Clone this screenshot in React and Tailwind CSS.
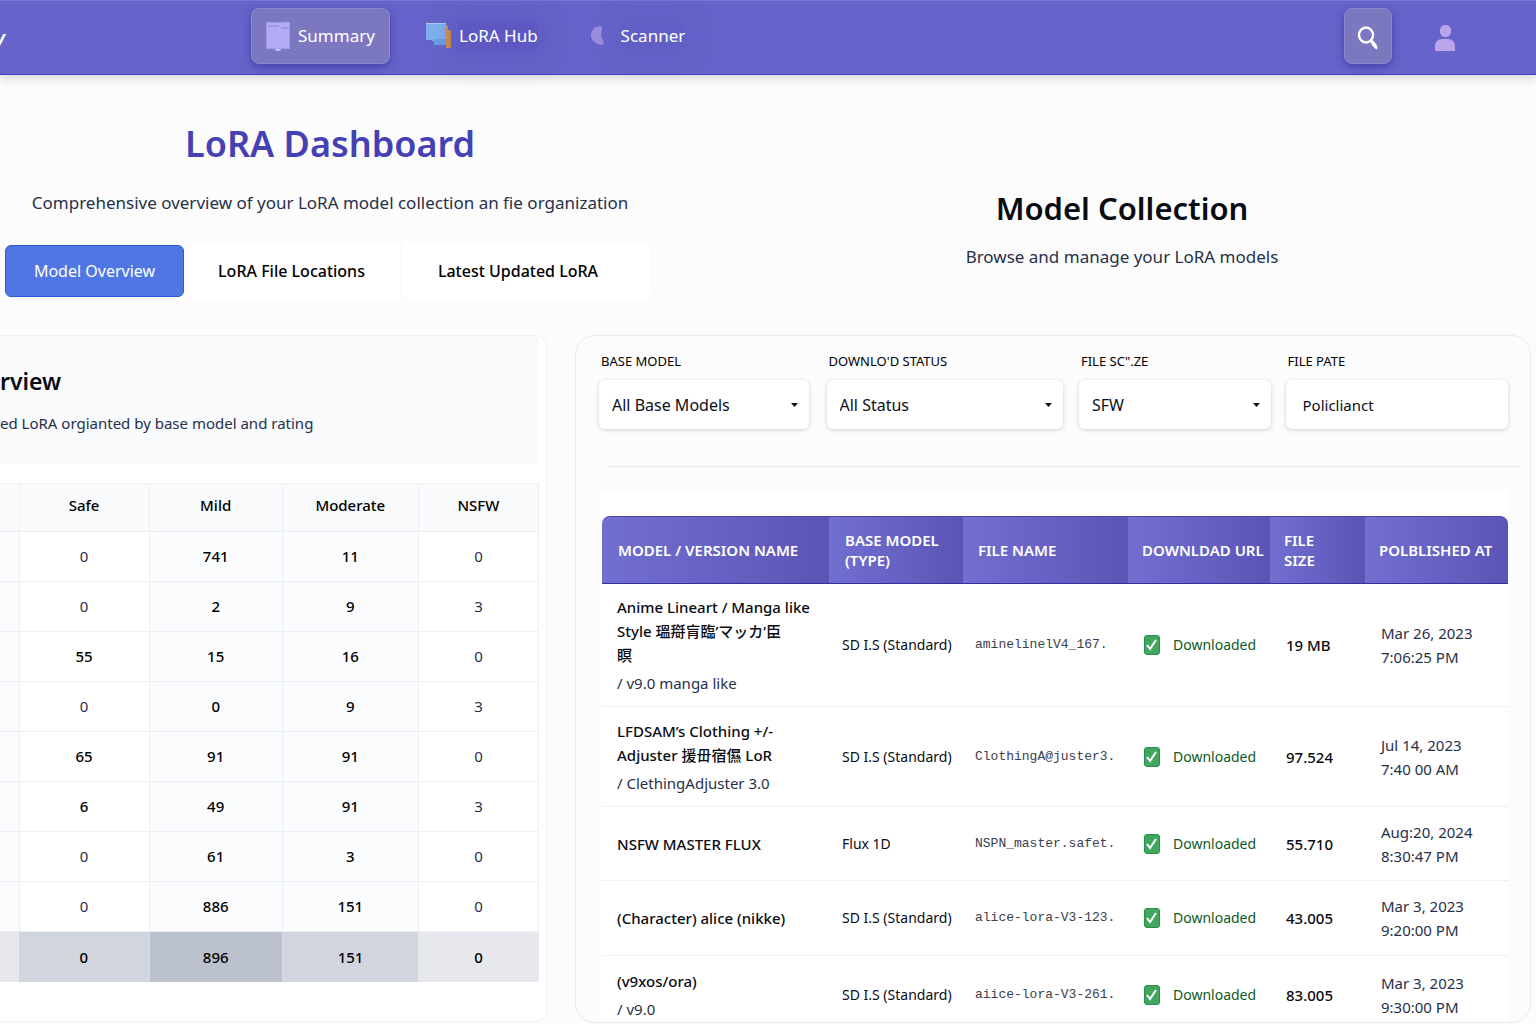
const ratingRows = [
  ["0", "741", "11", "0"],
  ["0", "2", "9", "3"],
  ["55", "15", "16", "0"],
  ["0", "0", "9", "3"],
  ["65", "91", "91", "0"],
  ["6", "49", "91", "3"],
  ["0", "61", "3", "0"],
  ["0", "886", "151", "0"],
];

const models = [
  {
    name: "Anime Lineart / Manga like\nStyle 瑥搿肓臨’マッカ\u2019臣\n瞑",
    version: "/ v9.0 manga like",
    base: "SD I.S (Standard)",
    file: "aminelinelV4_167.",
    size: "19 MB",
    date: "Mar 26, 2023",
    time: "7:06:25 PM",
    height: "h-[123px]",
  },
  {
    name: "LFDSAM’s Clothing +/-\nAdjuster 援毌宿儑 LoR",
    version: "/ ClethingAdjuster 3.0",
    base: "SD I.S (Standard)",
    file: "ClothingA@juster3.",
    size: "97.524",
    date: "Jul 14, 2023",
    time: "7:40 00 AM",
    height: "h-[100px]",
  },
  {
    name: "NSFW MASTER FLUX",
    base: "Flux 1D",
    file: "NSPN_master.safet.",
    size: "55.710",
    date: "Aug:20, 2024",
    time: "8:30:47 PM",
    height: "h-[74px]",
  },
  {
    name: "(Character) alice (nikke)",
    base: "SD I.S (Standard)",
    file: "alice-lora-V3-123.",
    size: "43.005",
    date: "Mar 3, 2023",
    time: "9:20:00 PM",
    height: "h-[75px]",
  },
  {
    name: "(v9xos/ora)",
    version: "/ v9.0",
    base: "SD I.S (Standard)",
    file: "aiice-lora-V3-261.",
    size: "83.005",
    date: "Mar 3, 2023",
    time: "9:30:00 PM",
    height: "h-[66px]",
  },
];

const columns = [
  { label: "MODEL / VERSION NAME", width: "w-[227px]", pad: "pl-4" },
  { label: "BASE MODEL (TYPE)", width: "w-[134px]", pad: "pl-4 pr-4" },
  { label: "FILE NAME", width: "w-[165px]", pad: "pl-[15px]" },
  { label: "DOWNLDAD URL", width: "w-[142px]", pad: "pl-[14px] whitespace-nowrap" },
  { label: "FILE SIZE", width: "w-[95px]", pad: "pl-[14px] pr-10" },
  { label: "POLBLISHED AT", width: "w-[143px]", pad: "pl-[14px] whitespace-nowrap" },
];

const cell = "border-b border-[#eff0f5] group-last:border-0 group-last:pt-3";

function DocumentIcon() {
  return (
    <svg className="h-8 w-6" viewBox="0 0 24 32" aria-hidden="true">
      <path d="M0 2h19l1-1 1 1h3v27H15l-1 2h-4l-1-2H0z" fill="#b3acf5" />
      <path d="M.5 2.500h23v26H.5z" fill="none" stroke="#a29bea" />
      <path d="M2 6h11M15 8h8" stroke="#8f87d8" strokeWidth="1" />
      <path d="M9 29.500h6" stroke="#cfcaff" strokeWidth="1" />
    </svg>
  );
}

function HubIcon() {
  return (
    <svg className="h-7 w-[26px]" viewBox="0 0 26 28" aria-hidden="true">
      <path d="M19 3l3 1v4h3v18h-5z" fill="#d39247" />
      <path d="M0 1h20v22H8v-4H6v-1H0z" fill="#7fb0ec" />
      <path d="M8 17h12v6H8z" fill="#66a0e4" />
      <path d="M0 1.500h20" stroke="#a9d2fa" />
    </svg>
  );
}

function ScannerIcon() {
  return (
    <svg className="h-5 w-4" viewBox="0 0 16 20" aria-hidden="true">
      <path
        d="M6 1c3-1 6-1 6 1 0 3-1 4-1 7s3 6 3 8c0 1-1 2-3 2-3-1-6-2-8-4-2-3-3-6-1-10 1-2 2-3 4-4z"
        fill="#9c8ce0"
      />
    </svg>
  );
}

function SearchIcon() {
  return (
    <svg className="h-6 w-6" viewBox="0 0 24 24" fill="none" aria-hidden="true">
      <ellipse cx="10" cy="9" rx="7" ry="7.500" stroke="#fff" strokeWidth="2.400" />
      <path d="M14 15l2-1.500c2.500 2 5 5 5.500 8l-.5 2c-3-1-5.500-5-7-8.500z" fill="#fff" />
    </svg>
  );
}

function UserIcon() {
  return (
    <svg className="h-[26px] w-5" viewBox="0 0 20 26" fill="#bba5ea" aria-hidden="true">
      <rect x="5" y="0" width="11" height="12" rx="5" />
      <path d="M0 26v-5c0-4 3-7 7-7h6c4 0 7 3 7 7v5z" />
    </svg>
  );
}

function CheckIcon() {
  return (
    <svg className="h-5 w-4 shrink-0" viewBox="0 0 16 20" aria-hidden="true">
      <rect x=".5" y=".5" width="15" height="19" rx="2.500" fill="#41a75f" stroke="#2a8e48" />
      <path d="M3 10l3 4 6-9" fill="none" stroke="#fff" strokeWidth="2" />
    </svg>
  );
}

function Select({ id, label, value, width }) {
  return (
    <div className={`flex flex-col gap-[9px] ${width}`}>
      <label htmlFor={id} className="pl-0.5 text-[13px] leading-5 text-black">
        {label}
      </label>
      <div className="relative">
        <select
          id={id}
          defaultValue={value}
          className="h-[49px] w-full appearance-none rounded-md bg-white px-[13px] text-[16px] text-[#0c0f1a] shadow-[0_1px_4px_rgba(0,0,0,0.18)]"
        >
          <option>{value}</option>
        </select>
        <svg
          className="pointer-events-none absolute top-[23px] right-[11px] h-1 w-[7px]"
          viewBox="0 0 7 4"
          aria-hidden="true"
        >
          <path d="M0 0h7L3.500 4z" fill="#111" />
        </svg>
      </div>
    </div>
  );
}

function Header() {
  return (
    <header className="flex h-[75px] items-start border-t border-b border-t-[#7a76d2] border-b-[#4640bb] bg-[#6664ca] pt-[7px] text-[17px] text-white shadow-[0_3px_10px_rgba(0,0,0,0.16)]">
      <div className="flex h-14 w-[251px] overflow-hidden">
        <span className="-ml-[5px] flex items-center pt-1 text-[20px] font-semibold italic">y</span>
      </div>
      <nav className="flex h-14 items-stretch" aria-label="Main">
        <a
          href="#summary"
          className="flex w-[139px] items-center gap-2 rounded-lg border border-[#8c88cb] bg-[#7c78c0] pl-3.5 shadow-[0_3px_8px_rgba(40,30,140,0.5)]"
        >
          <DocumentIcon />
          Summary
        </a>
        <a href="#hub" className="ml-9 flex items-center gap-[7px]">
          <HubIcon />
          <span className="bg-[rgba(75,65,175,0.3)] shadow-[0_0_24px_8px_rgba(75,65,175,0.3)]">LoRA Hub</span>
        </a>
        <a href="#scanner" className="ml-[52px] flex items-center gap-[15px]">
          <ScannerIcon />
          <span className="bg-[rgba(75,65,175,0.15)] shadow-[0_0_24px_8px_rgba(75,65,175,0.15)]">Scanner</span>
        </a>
      </nav>
      <div className="mr-[81px] ml-auto flex h-14 items-center gap-[43px]">
        <button
          type="button"
          aria-label="Search"
          className="flex h-14 w-12 items-center justify-center rounded-lg border border-[#8c88cb] bg-[#7c78c0] pt-1 shadow-[0_3px_8px_rgba(40,30,140,0.5)]"
        >
          <SearchIcon />
        </button>
        <button type="button" aria-label="Account" className="pt-1">
          <UserIcon />
        </button>
      </div>
    </header>
  );
}

function RatingCard() {
  return (
    <section className="overflow-hidden rounded-r-xl border-y border-r border-[#eef0f4] bg-white pr-[7px] pb-[39px]">
      <div className="mb-[19px] h-32 bg-[#f8fafc] pt-[29px]">
        <h3 className="text-[23px] leading-8 font-semibold text-[#0a0c14]">rview</h3>
        <p className="mt-3.5 text-[15px] leading-6 text-[#27304a]">ed LoRA orgianted by base model and rating</p>
      </div>
      <table className="w-full table-fixed border-collapse text-center text-[15px] text-black">
        <colgroup>
          <col className="w-[19px]" />
          <col className="w-[130px]" />
          <col className="w-[133px]" />
          <col className="w-[136px]" />
          <col className="w-[120px]" />
        </colgroup>
        <thead>
          <tr className="h-12 bg-[#f8fafc]">
            <th className="border-y border-[#eceff3]" />
            {["Safe", "Mild", "Moderate", "NSFW"].map((h) => (
              <th key={h} scope="col" className="border border-[#eceff3] pb-1 font-medium">
                {h}
              </th>
            ))}
          </tr>
        </thead>
        <tbody>
          {ratingRows.map((row, r) => (
            <tr key={r} className="h-[50px]">
              <td className="border-y border-[#eceff3] bg-[#fafcfe]" />
              {row.map((v, c) => (
                <td
                  key={c}
                  className={`border border-[#eceff3] ${c === 1 || c === 2 ? "bg-[#fafcfe] font-medium" : v.length > 1 || v === "6" ? "font-medium" : "text-[#27304a]"}`}
                >
                  {v}
                </td>
              ))}
            </tr>
          ))}
        </tbody>
        <tfoot>
          <tr className="h-[50px] font-medium">
            <td className="bg-[#e6e8ed]" />
            <td className="bg-[#d1d5de]">0</td>
            <td className="border-x border-[#d9dce3] bg-[#bcc2cd]">896</td>
            <td className="bg-[#d1d5de]">151</td>
            <td className="bg-[#e6e8ed]">0</td>
          </tr>
        </tfoot>
      </table>
    </section>
  );
}

function CollectionCard() {
  return (
    <section className="rounded-[20px] border border-[#e8eaf4] bg-[#fcfcfd] pr-[22px] pl-[23px]">
      <form className="flex pt-[15px]">
        <Select id="base" label="BASE MODEL" value="All Base Models" width="mr-[18px] flex-[210]" />
        <Select id="status" label="DOWNLO'D STATUS" value="All Status" width="mr-4 flex-[237]" />
        <Select id="rating" label={'FILE SC".ZE'} value="SFW" width="mr-[15px] flex-[192]" />
        <div className="flex flex-[223] flex-col gap-[9px]">
          <label htmlFor="path" className="pl-0.5 text-[13px] leading-5 text-black">
            FILE PATE
          </label>
          <input
            id="path"
            type="text"
            defaultValue="Policlianct"
            className="h-[49px] w-full rounded-md bg-white px-[17px] text-[15px] text-[#0c0f1a] shadow-[0_1px_4px_rgba(0,0,0,0.18)]"
          />
        </div>
      </form>
      <hr className="mt-[37px] -mr-3 ml-2 border-[#e4eaf2]" />
      <div className="mt-6 bg-white pt-[25px] pl-[3px]">
        <table className="w-full table-fixed border-separate border-spacing-0 text-left text-[15px] leading-6 text-[#0a0c14]">
          <colgroup>
            {columns.map((c) => (
              <col key={c.label} className={c.width} />
            ))}
          </colgroup>
          <thead>
            <tr className="h-[68px] text-[15px] leading-5 text-white">
              {columns.map((c) => (
                <th
                  key={c.label}
                  scope="col"
                  className={`border-t border-b border-t-[#4a45b2] border-b-[#352fa0] bg-linear-to-r from-[#736fd1] to-[#5a55b5] font-semibold first:rounded-tl-lg last:rounded-tr-lg ${c.pad}`}
                >
                  {c.label}
                </th>
              ))}
            </tr>
          </thead>
          <tbody>
            {models.map((m) => (
              <tr key={m.file} className={`${m.height} group`}>
                <td className={`${cell} pl-[15px]`}>
                  <div className="font-medium whitespace-pre-line">{m.name}</div>
                  {m.version && <div className="mt-1 text-[#27304a]">{m.version}</div>}
                </td>
                <td className={`${cell} pl-[13px] text-[14px] whitespace-nowrap`}>{m.base}</td>
                <td className={`${cell} pl-3 font-['Liberation_Mono',monospace] text-[13px] text-[#3c404c]`}>{m.file}</td>
                <td className={`${cell} pl-4 text-[14px] text-[#0d5a1e]`}>
                  <div className="flex items-center gap-[13px]">
                    <CheckIcon />
                    Downloaded
                  </div>
                </td>
                <td className={`${cell} pl-4 font-medium whitespace-nowrap`}>{m.size}</td>
                <td className={`${cell} pl-4 whitespace-nowrap text-[#27304a]`}>
                  {m.date}
                  <br />
                  {m.time}
                </td>
              </tr>
            ))}
          </tbody>
        </table>
      </div>
    </section>
  );
}

export default function App() {
  return (
    <div className="min-h-screen overflow-hidden bg-[#fcfcfc] font-['Noto_Sans','Noto_Sans_CJK_JP',sans-serif]">
      <Header />
      <main>
        <div className="grid grid-cols-[660fr_828fr] gap-12">
          <div className="pt-11 text-center">
            <h1 className="text-[36px] leading-[50px] font-semibold text-[#4540b4]">LoRA Dashboard</h1>
            <p className="mt-[22px] text-[17px] leading-6 whitespace-nowrap text-[#27304a]">
              Comprehensive overview of your LoRA model collection an fie organization
            </p>
            <div className="mt-7 flex h-14 items-stretch pl-[5px] text-[16px]">
              <button
                type="button"
                className="my-0.5 w-[179px] rounded-md border border-[#2f58d6] bg-[#5076e4] text-white"
              >
                Model Overview
              </button>
              <button type="button" className="ml-1.5 w-[212px] border-r border-[#f3f3f6] bg-white pr-2 font-medium text-black">
                LoRA File Locations
              </button>
              <button type="button" className="w-[248px] rounded-r-lg bg-white pr-4 font-medium text-black">
                Latest Updated LoRA
              </button>
            </div>
          </div>
          <div className="pt-[108px] text-center">
            <h2 className="text-[31px] leading-[50px] font-semibold text-[#0a0c14]">Model Collection</h2>
            <p className="mt-3 text-[17px] leading-6 text-[#27304a]">Browse and manage your LoRA models</p>
          </div>
        </div>
        <div className="mt-9 grid grid-cols-[547fr_956fr] items-start gap-7 pr-[5px]">
          <RatingCard />
          <CollectionCard />
        </div>
      </main>
    </div>
  );
}
